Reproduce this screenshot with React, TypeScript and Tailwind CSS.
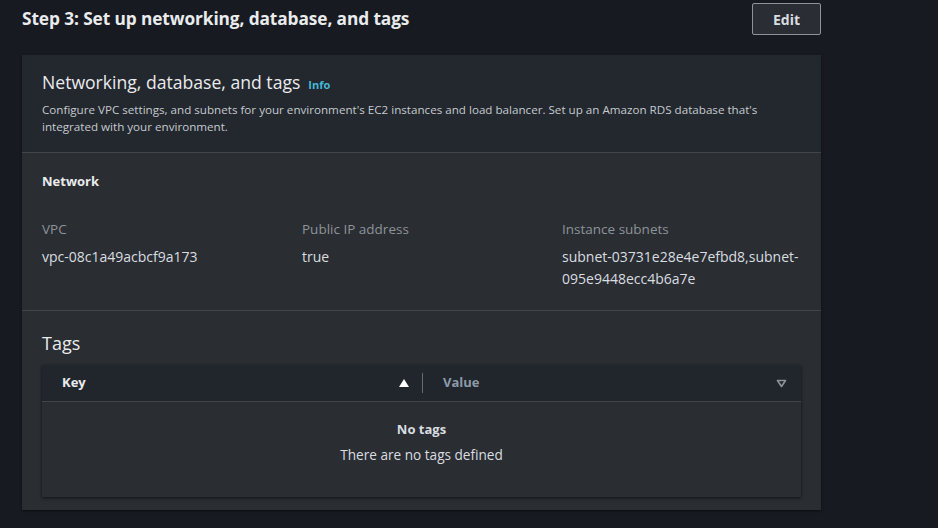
export default function App() {
  return (
    <div
      className="min-h-[528px] w-[938px] bg-[#171a21] text-[#d5dbdb]"
      style={{ fontFamily: '"Open Sans", "Noto Sans", sans-serif' }}
    >
      <div className="w-[799px] ml-[22px] pt-[3px]">
        {/* Step header */}
        <div className="flex items-start justify-between h-[52px]">
          <h2 className="text-[17.3px] font-bold text-[#e9ebed] leading-[30px] mt-[1px] tracking-[-0.1px]">
            Step 3: Set up networking, database, and tags
          </h2>
          <button className="w-[69px] h-[32px] border border-[#8d9499] rounded-[2px] bg-[#2a2d33] text-[14px] font-bold text-[#d9dde0]">
            Edit
          </button>
        </div>

        {/* Card */}
        <div className="bg-[#2a2d32] shadow-[0_1px_2px_rgba(0,0,0,0.5)]">
          <div className="bg-[#23272e] px-5 pt-[14px] pb-[17px] border-b border-[#41454c]">
            <div className="flex items-baseline gap-[8px]">
              <span className="text-[17.6px] leading-[26px] text-[#e9ebed]">
                Networking, database, and tags
              </span>
              <span className="text-[11px] font-bold text-[#44b9d6]">Info</span>
            </div>
            <p className="text-[11.63px] leading-[17px] text-[#c5cbce] mt-[6px] w-[740px]">
              Configure VPC settings, and subnets for your environment's EC2 instances and load balancer. Set up an Amazon RDS database that's integrated with your environment.
            </p>
          </div>

          <div className="px-5 pt-[19px] pb-[20px] border-b border-[#41454c]">
            <div className="text-[13px] font-bold text-[#e9ebed] leading-[18px]">Network</div>
            <div className="grid grid-cols-[260px_260px_1fr] mt-[30px]">
              <div>
                <div className="text-[13.5px] text-[#8d9499] leading-[18px]">VPC</div>
                <div className="text-[14px] text-[#d9dde0] leading-[22px] mt-[8px]">vpc-08c1a49acbcf9a173</div>
              </div>
              <div>
                <div className="text-[13.5px] text-[#8d9499] leading-[18px]">Public IP address</div>
                <div className="text-[14px] text-[#d9dde0] leading-[22px] mt-[8px]">true</div>
              </div>
              <div>
                <div className="text-[13.5px] text-[#8d9499] leading-[18px]">Instance subnets</div>
                <div className="text-[14px] text-[#d9dde0] leading-[22px] mt-[8px] w-[240px]">
                  subnet-03731e28e4e7efbd8,subnet-095e9448ecc4b6a7e
                </div>
              </div>
            </div>
          </div>

          <div className="px-5 pt-[19px] pb-[13px]">
            <div className="text-[18px] leading-[26px] text-[#e9ebed]">Tags</div>
            <div className="mt-[9px] bg-[#2a2d32] shadow-[0_1px_3px_rgba(0,0,0,0.6)]">
              <div className="flex h-[37px] bg-[#21252c] border-b border-[#41454c] items-center text-[13px] font-bold">
                <div className="flex items-center w-[380px] pl-5 pr-[12px]">
                  <span className="text-[#e9ebed] flex-1">Key</span>
                  <svg width="12" height="10" viewBox="0 0 12 10">
                    <path d="M6 1 L11 9 L1 9 Z" fill="#ffffff" />
                  </svg>
                </div>
                <div className="w-px h-[20px] bg-[#5f6b7a]" />
                <div className="flex items-center flex-1 pl-5 pr-[14px]">
                  <span className="text-[#8d9ba8] flex-1">Value</span>
                  <svg width="11" height="9" viewBox="0 0 11 9">
                    <path d="M1.5 1.5 L9.5 1.5 L5.5 7.5 Z" fill="none" stroke="#8d9499" strokeWidth="1.6" strokeLinejoin="round" />
                  </svg>
                </div>
              </div>
              <div className="h-[95px] flex flex-col items-center pt-[17px]">
                <div className="text-[13px] font-bold text-[#d9dde0] leading-[20px]">No tags</div>
                <div className="text-[13.6px] text-[#d9dde0] leading-[20px] mt-[6px]">There are no tags defined</div>
              </div>
            </div>
          </div>
        </div>
      </div>
    </div>
  );
}
